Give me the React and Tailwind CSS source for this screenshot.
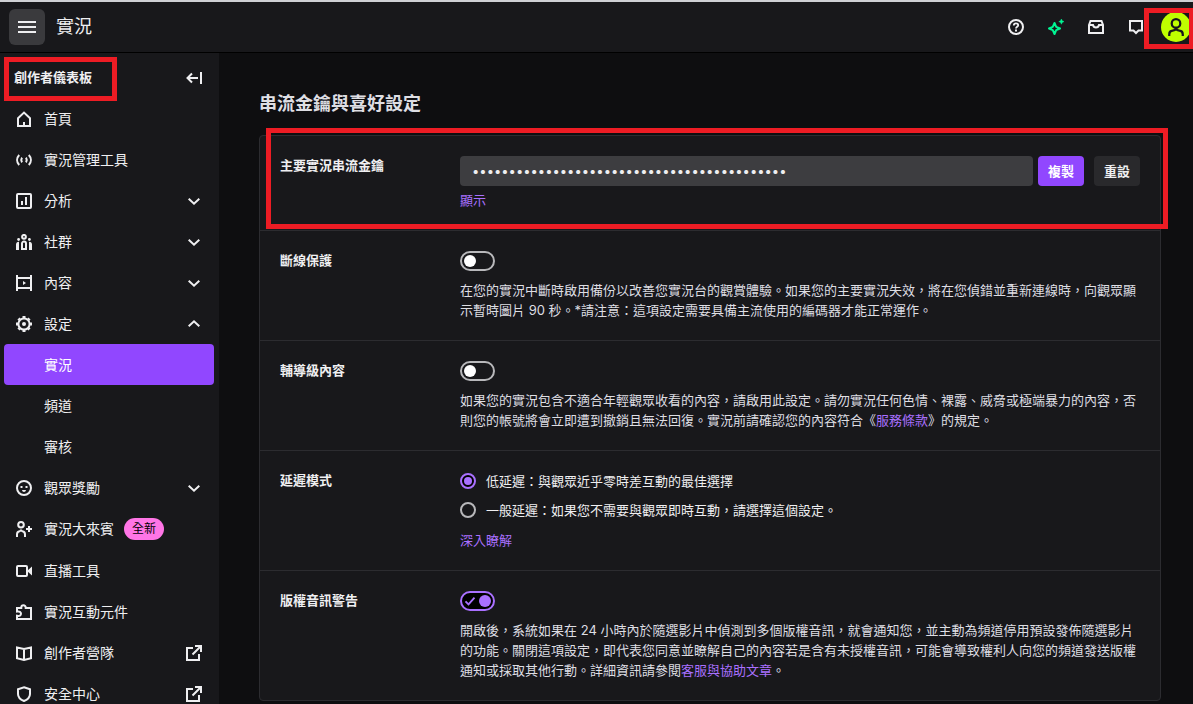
import { useState } from 'react'

/* ===== ICONS ===== */
function Icon({ children, className = 'size-4' }) {
  return (
    <svg
      viewBox="0 0 16 16"
      fill="none"
      stroke="currentColor"
      strokeWidth="2"
      className={`${className} shrink-0`}
      aria-hidden="true"
    >
      {children}
    </svg>
  )
}

const icons = {
  home: (
    <>
      <path d="M2 7.2 8 1.6l6 5.6V15H2z" />
      <path d="M8 15v-4" />
    </>
  ),
  broadcast: (
    <>
      <path d="M3.2 3C.4 6 .4 10 3.2 13M12.8 3c2.8 3 2.8 7 0 10" />
      <path d="M6 5.6c-1 1.6-1 3.2 0 4.8M10 5.6c1 1.6 1 3.2 0 4.8" />
    </>
  ),
  chart: (
    <>
      <rect x="1" y="1" width="14" height="14" rx="1" />
      <path d="M6 8v4M10 4v8" />
    </>
  ),
  community: (
    <>
      <circle cx="8" cy="2.8" r="1.9" />
      <path d="M6 15V9.5C6 8.4 6.8 7.6 8 7.6s2 .8 2 1.9V15z" />
      <g fill="currentColor" stroke="none">
        <circle cx="2.6" cy="5.5" r="1.4" />
        <circle cx="13.4" cy="5.5" r="1.4" />
        <path d="M0 16v-5.5C0 9 1 7.8 3 7.8V16zM16 16v-5.5C16 9 15 7.8 13 7.8V16z" />
      </g>
    </>
  ),
  content: (
    <>
      <path d="M1 0v16M15 0v16M1 3h14M1 13h14" />
      <path d="M7 6v4l3-2z" fill="currentColor" stroke="none" />
    </>
  ),
  gear: (
    <>
      <circle cx="8" cy="8" r="5.6" />
      <circle cx="8" cy="8" r="2" fill="currentColor" stroke="none" />
      <path
        strokeWidth="3"
        d="M8 0v2M8 14v2M0 8h2M14 8h2M2.5 2.5l1.2 1.2M12.3 12.3l1.2 1.2M2.5 13.5l1.2-1.2M12.3 3.7l1.2-1.2"
      />
    </>
  ),
  smile: (
    <>
      <circle cx="8" cy="8" r="7" />
      <path d="M4.5 7h2M9.5 7h2" />
      <path d="M6 10h4c-.2 1.3-1 2-2 2s-1.800-.7-2-2z" fill="currentColor" stroke="none" />
    </>
  ),
  guest: (
    <>
      <circle cx="5" cy="3.8" r="2.8" />
      <path d="M1 16v-2.500C1 11.500 2 10.500 3.500 10.300 4.500 10.100 5 9.500 5 8.500c0 1 .5 1.600 1.500 1.800C8 10.500 9 11.500 9 13.500V16" />
      <path d="M13 5v6M10 8h6" />
    </>
  ),
  camera: (
    <>
      <rect x="1" y="3" width="10" height="10" rx="1" />
      <path d="M11 8l5-4.500v9z" fill="currentColor" stroke="none" />
    </>
  ),
  puzzle: <path d="M1 4h4.300V3.500a2.200 2.200 0 0 1 4.400 0V4H15v11H1v-3.300c2.600.6 4-.4 4-2S3.600 7 1 7.600z" />,
  book: <path d="M1 2.5 8 4l7-1.500v10.800L8 15l-7-1.700zM8 4v11" />,
  shield: <path d="M8 1.300 14 3.200V8c0 3.200-2.500 5.600-6 7-3.500-1.400-6-3.800-6-7V3.200z" />,
  down: <path d="m2.700 5.700 5.300 5 5.300-5" />,
  up: <path d="m2.700 10.300 5.300-5 5.300 5" />,
  external: <path d="M7 3H1v12h12V9M9 1h6v6M15 1 6.500 9.500" />,
  collapse: <path d="M15 2v12M12 8H1.500M6 3.500 1.500 8 6 12.500" />,
  menu: <path d="M0 4h18M0 9h18M0 14h18" transform="scale(.8889)" />,
  help: (
    <>
      <circle cx="8" cy="8" r="7" />
      <path d="M5.800 6.500C5.800 5.200 6.700 4.400 8 4.400s2.200.8 2.200 1.900c0 1.600-2.200 1.500-2.200 3.200" strokeWidth="1.800" />
      <path d="M8 10.500v2" />
    </>
  ),
  sparkle: (
    <>
      <path d="M6.500 4 8.200 7.800 12 9.500l-3.800 1.700L6.500 15l-1.700-3.800L1 9.500l3.800-1.700z" strokeLinejoin="round" />
      <path d="m13.400 0 .8 1.800 1.800.8-1.800.8-.8 1.800-.8-1.800-1.800-.8 1.800-.8z" fill="currentColor" strokeWidth=".5" />
    </>
  ),
  inbox: <path d="M1 6l1.500-4h11L15 6v8H1zM1 6h4c.4 1.700 1.400 2.500 3 2.500s2.600-.8 3-2.500h4" />,
  chat: <path d="M2 2h12v9.500h-3.500L8 14l-2.500-2.500H2z" />,
  person: (
    <>
      <circle cx="8" cy="4.800" r="3.800" />
      <path d="M2 16v-1.500c0-2.200 1.200-3.200 3-3.300 2-.1 3-.9 3-2.700 0 1.800 1 2.600 3 2.700 1.800.1 3 1.100 3 3.300V16" />
    </>
  ),
}

const navItems = [
  { label: '首頁', icon: 'home' },
  { label: '實況管理工具', icon: 'broadcast' },
  { label: '分析', icon: 'chart', end: 'down' },
  { label: '社群', icon: 'community', end: 'down' },
  { label: '內容', icon: 'content', end: 'down' },
  { label: '設定', icon: 'gear', end: 'up' },
  { label: '實況', active: true },
  { label: '頻道' },
  { label: '審核' },
  { label: '觀眾獎勵', icon: 'smile', end: 'down' },
  { label: '實況大來賓', icon: 'guest', badge: '全新' },
  { label: '直播工具', icon: 'camera' },
  { label: '實況互動元件', icon: 'puzzle' },
  { label: '創作者營隊', icon: 'book', end: 'external' },
  { label: '安全中心', icon: 'shield', end: 'external' },
]

const headerActions = [
  { label: '說明', icon: 'help', color: 'text-[#efeff1]' },
  { label: '新功能', icon: 'sparkle', color: 'text-[#00f593]' },
  { label: '通知', icon: 'inbox', color: 'text-[#efeff1]' },
  { label: '悄悄話', icon: 'chat', color: 'text-[#efeff1]' },
]

/* ===== SIDEBAR ===== */
function NavItem({ item }) {
  return (
    <li>
      <a
        href="#"
        aria-current={item.active ? 'page' : undefined}
        className={`flex min-h-[41px] items-center rounded px-3 py-[10px] text-sm ${
          item.active ? 'bg-[#9147ff] text-white' : ''
        }`}
      >
        <span className="mr-3 w-4">{item.icon && <Icon>{icons[item.icon]}</Icon>}</span>
        <span>{item.label}</span>
        {item.badge && (
          <span className="ml-[10px] rounded-full bg-[#ff75e6] px-2 text-xs leading-[22px] text-black">
            {item.badge}
          </span>
        )}
        {item.end && (
          <span className="ml-auto">
            <Icon>{icons[item.end]}</Icon>
          </span>
        )}
      </a>
    </li>
  )
}

function Sidebar() {
  return (
    <aside className="w-[219px] shrink-0 bg-[#18181b] pr-[5px] pl-1">
      <div className="relative flex h-[45px] items-center justify-between pt-1 pr-3 pl-[10px]">
        <h2 className="text-[13px] font-bold">創作者儀表板</h2>
        <button type="button" aria-label="收合" className="block">
          <Icon>{icons.collapse}</Icon>
        </button>
        <div className="pointer-events-none absolute top-1 left-0 h-11 w-[113px] border-5 border-[#ed1c24]" />
      </div>
      <nav>
        <ul>
          {navItems.map((item, i) => (
            <NavItem key={i} item={item} />
          ))}
        </ul>
      </nav>
    </aside>
  )
}

/* ===== SETTINGS CONTROLS ===== */
function Row({ label, htmlFor, children }) {
  return (
    <div className="flex border-t border-[#2c2c30] p-5 first:border-t-0">
      <div className="w-[180px] shrink-0 leading-[18px] font-bold">
        {htmlFor ? <label htmlFor={htmlFor}>{label}</label> : label}
      </div>
      <div className="min-w-0 flex-1">{children}</div>
    </div>
  )
}

function Toggle({ id, defaultChecked = false }) {
  const [on, setOn] = useState(defaultChecked)
  return (
    <div className="relative flex h-5 w-[35px]">
      <input
        id={id}
        type="checkbox"
        checked={on}
        onChange={(e) => setOn(e.target.checked)}
        className="flex h-5 w-[35px] appearance-none items-center rounded-full border-2 border-[#b8b8bb] before:ml-[2px] before:size-3 before:rounded-full before:bg-white checked:border-[#a970ff] checked:bg-black checked:before:ml-[17px] checked:before:bg-[#a970ff]"
      />
      {on && (
        <Icon className="pointer-events-none absolute top-1 left-1 size-3 text-[#a970ff]">
          <path d="m2 8.500 4 4 8-9" strokeWidth="2.500" />
        </Icon>
      )}
    </div>
  )
}

function Radio({ label, ...props }) {
  return (
    <label className="flex items-center gap-[10px]">
      <input
        type="radio"
        name="latency"
        className="grid size-4 shrink-0 appearance-none place-content-center rounded-full border-2 border-[#b8b8bb] checked:border-[#a970ff] checked:bg-black checked:before:size-2 checked:before:rounded-full checked:before:bg-[#a970ff]"
        {...props}
      />
      {label}
    </label>
  )
}

function Description({ children }) {
  return <p className="mt-[9px] text-[#dedee3]">{children}</p>
}

function TextLink({ children }) {
  return (
    <a href="#" className="inline-block text-[#a970ff]">
      {children}
    </a>
  )
}

function App() {
  const [showKey, setShowKey] = useState(false)

  return (
    <div className="flex h-screen flex-col overflow-hidden bg-[#0e0e10] font-['Inter','Noto_Sans_CJK_TC',sans-serif] text-[#efeff1]">
      {/* ===== HEADER ===== */}
      <header className="relative flex shrink-0 items-center justify-between border-t-2 border-b border-t-[#cfd0d4] border-b-black bg-[#18181b] pr-[2px] pl-[9px]">
        <div className="flex h-[50px] items-center gap-[11px]">
          <button
            type="button"
            aria-label="選單"
            className="flex size-9 items-center justify-center rounded-md bg-[#3a3a3d]"
          >
            <Icon className="size-[18px]">{icons.menu}</Icon>
          </button>
          <h1 className="text-lg">實況</h1>
        </div>
        <div className="flex items-center">
          {headerActions.map(({ label, icon, color }) => (
            <button
              key={icon}
              type="button"
              aria-label={label}
              className={`flex h-[30px] w-10 items-center justify-center ${color}`}
            >
              <Icon>{icons[icon]}</Icon>
            </button>
          ))}
          <button
            type="button"
            aria-label="使用者選單"
            className="ml-[5px] flex size-[30px] items-center justify-center rounded-full bg-[#bfff00] text-[#18181b]"
          >
            <Icon className="size-[18px]">{icons.person}</Icon>
          </button>
        </div>
        <div className="pointer-events-none absolute top-[6px] -right-px h-[41px] w-[50px] border-5 border-[#ed1c24]" />
      </header>

      <div className="flex min-h-0 flex-1">
        <Sidebar />

        {/* ===== MAIN CONTENT ===== */}
        <main className="min-w-0 flex-1 pt-[37px] pr-8 pl-10">
          <h2 className="text-lg leading-7 font-semibold text-[#dedee3]">串流金鑰與喜好設定</h2>

          <section className="relative mt-[17px] rounded border border-[#2c2c30] bg-[#18181b] text-[13px] leading-5">
            <Row label="主要實況串流金鑰" htmlFor="stream-key">
              <div className="flex">
                <input
                  id="stream-key"
                  type={showKey ? 'text' : 'password'}
                  readOnly
                  value="live_000000000_abcdefghijklmnopqrstuvwxyz01"
                  className="h-[30px] min-w-0 flex-1 rounded bg-[#3d3d40] px-3 text-[13px]"
                />
                <button type="button" className="ml-[5px] h-[30px] rounded bg-[#9147ff] px-[10px] font-bold text-white">
                  複製
                </button>
                <button type="button" className="ml-[10px] h-[30px] rounded bg-[#29292c] px-[10px] font-bold">
                  重設
                </button>
              </div>
              <button type="button" className="mt-1 block text-[#a970ff]" onClick={() => setShowKey(!showKey)}>
                顯示
              </button>
            </Row>

            <Row label="斷線保護" htmlFor="disconnect">
              <Toggle id="disconnect" />
              <Description>
                在您的實況中斷時啟用備份以改善您實況台的觀賞體驗。如果您的主要實況失效，將在您偵錯並重新連線時，向觀眾顯示暫時圖片
                90 秒。*請注意：這項設定需要具備主流使用的編碼器才能正常運作。
              </Description>
            </Row>

            <Row label="輔導級內容" htmlFor="mature">
              <Toggle id="mature" />
              <Description>
                如果您的實況包含不適合年輕觀眾收看的內容，請啟用此設定。請勿實況任何色情、裸露、威脅或極端暴力的內容，否則您的帳號將會立即遭到撤銷且無法回復。實況前請確認您的內容符合《
                <TextLink>服務條款</TextLink>》的規定。
              </Description>
            </Row>

            <Row label="延遲模式">
              <div className="grid gap-[9px]">
                <Radio label="低延遲：與觀眾近乎零時差互動的最佳選擇" defaultChecked />
                <Radio label="一般延遲：如果您不需要與觀眾即時互動，請選擇這個設定。" />
              </div>
              <div className="mt-[10px]">
                <TextLink>深入瞭解</TextLink>
              </div>
            </Row>

            <Row label="版權音訊警告" htmlFor="copyright">
              <Toggle id="copyright" defaultChecked />
              <Description>
                開啟後，系統如果在 24
                小時內於隨選影片中偵測到多個版權音訊，就會通知您，並主動為頻道停用預設發佈隨選影片的功能。關閉這項設定，即代表您同意並瞭解自己的內容若是含有未授權音訊，可能會導致權利人向您的頻道發送版權通知或採取其他行動。詳細資訊請參閱
                <TextLink>客服與協助文章</TextLink>。
              </Description>
            </Row>

            <div className="pointer-events-none absolute -top-2 -right-2 left-[6px] h-[101px] border-5 border-[#ed1c24]" />
          </section>
        </main>
      </div>
    </div>
  )
}

export default App
